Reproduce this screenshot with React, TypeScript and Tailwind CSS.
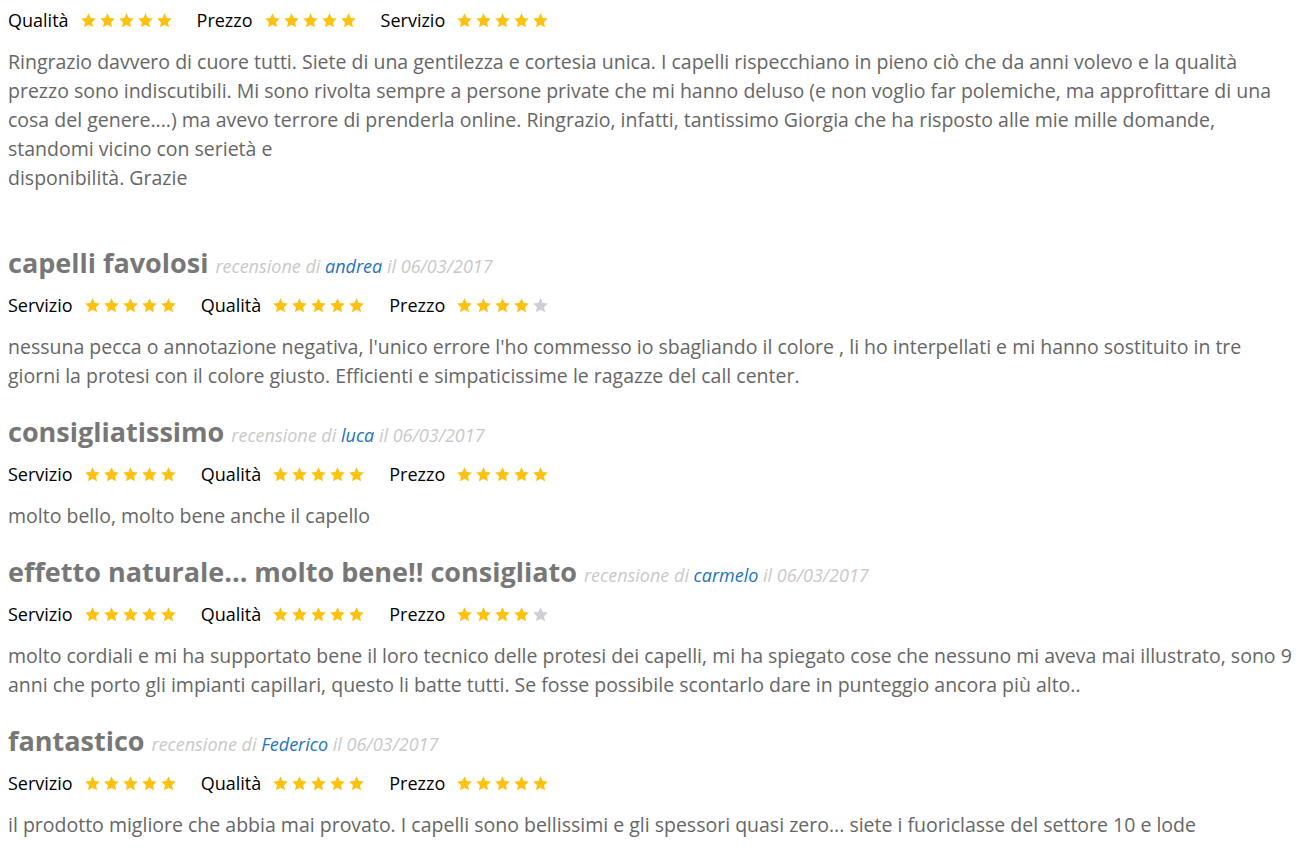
type Rating = { label: string; value: number }

type Review = {
  title: string
  author: string
  date: string
  ratings: Rating[]
  text: string
}

const reviews: Review[] = [
  {
    title: 'capelli favolosi',
    author: 'andrea',
    date: '06/03/2017',
    ratings: [
      { label: 'Servizio', value: 5 },
      { label: 'Qualità', value: 5 },
      { label: 'Prezzo', value: 4 },
    ],
    text: "nessuna pecca o annotazione negativa, l'unico errore l'ho commesso io sbagliando il colore , li ho interpellati e mi hanno sostituito in tre giorni la protesi con il colore giusto. Efficienti e simpaticissime le ragazze del call center.",
  },
  {
    title: 'consigliatissimo',
    author: 'luca',
    date: '06/03/2017',
    ratings: [
      { label: 'Servizio', value: 5 },
      { label: 'Qualità', value: 5 },
      { label: 'Prezzo', value: 5 },
    ],
    text: 'molto bello, molto bene anche il capello',
  },
  {
    title: 'effetto naturale... molto bene!! consigliato',
    author: 'carmelo',
    date: '06/03/2017',
    ratings: [
      { label: 'Servizio', value: 5 },
      { label: 'Qualità', value: 5 },
      { label: 'Prezzo', value: 4 },
    ],
    text: 'molto cordiali e mi ha supportato bene il loro tecnico delle protesi dei capelli, mi ha spiegato cose che nessuno mi aveva mai illustrato, sono 9 anni che porto gli impianti capillari, questo li batte tutti. Se fosse possibile scontarlo dare in punteggio ancora più alto..',
  },
  {
    title: 'fantastico',
    author: 'Federico',
    date: '06/03/2017',
    ratings: [
      { label: 'Servizio', value: 5 },
      { label: 'Qualità', value: 5 },
      { label: 'Prezzo', value: 5 },
    ],
    text: 'il prodotto migliore che abbia mai provato. I capelli sono bellissimi e gli spessori quasi zero... siete i fuoriclasse del settore 10 e lode',
  },
]

function Star({ filled }: { filled: boolean }) {
  return (
    <svg viewBox="0 0 24 24" className={filled ? 'h-[17px] w-[17px] fill-[#fcc20f]' : 'h-[17px] w-[17px] fill-[#cfcfd3]'}>
      <path d="M12 1.8l3.1 6.6 7.2.9-5.3 5 1.4 7.1L12 17.9l-6.4 3.5 1.4-7.1-5.3-5 7.2-.9z" />
    </svg>
  )
}

function RatingRow({ ratings }: { ratings: Rating[] }) {
  return (
    <div className="flex h-6 items-center gap-[24px] text-[18px] text-black">
      {ratings.map((r) => (
        <div key={r.label} className="flex items-center gap-[11px]">
          <span>{r.label}</span>
          <div className="flex gap-[2px]">
            {[1, 2, 3, 4, 5].map((i) => (
              <Star key={i} filled={i <= r.value} />
            ))}
          </div>
        </div>
      ))}
    </div>
  )
}

export default function App() {
  return (
    <div className="min-h-screen bg-white px-2 pt-2 font-['Open_Sans',sans-serif] text-[#666]">
      <RatingRow
        ratings={[
          { label: 'Qualità', value: 5 },
          { label: 'Prezzo', value: 5 },
          { label: 'Servizio', value: 5 },
        ]}
      />
      <p className="mt-[15px] text-[19.5px] leading-[29px]">
        Ringrazio davvero di cuore tutti. Siete di una gentilezza e cortesia unica. I capelli rispecchiano in pieno ciò che da anni volevo e la qualità prezzo sono indiscutibili. Mi sono rivolta sempre a persone private che mi hanno deluso (e non voglio far polemiche, ma approfittare di una cosa del genere....) ma avevo terrore di prenderla online. Ringrazio, infatti, tantissimo Giorgia che ha risposto alle mie mille domande, standomi vicino con serietà e
        <br />
        disponibilità. Grazie
      </p>

      <div className="mt-[53px] flex flex-col gap-[24px]">
        {reviews.map((rev) => (
          <div key={rev.title}>
            <div className="flex items-baseline gap-[7px] leading-[36px]">
              <h3 className="text-[27px] font-bold text-[#777]">{rev.title}</h3>
              <span className="text-[18px] italic text-[#c9c9c9]">
                recensione di <a className="text-[#1e73be]">{rev.author}</a> il {rev.date}
              </span>
            </div>
            <div className="mt-[9px]">
              <RatingRow ratings={rev.ratings} />
            </div>
            <p className="mt-[15px] text-[19.5px] leading-[29px]">{rev.text}</p>
          </div>
        ))}
      </div>
    </div>
  )
}
